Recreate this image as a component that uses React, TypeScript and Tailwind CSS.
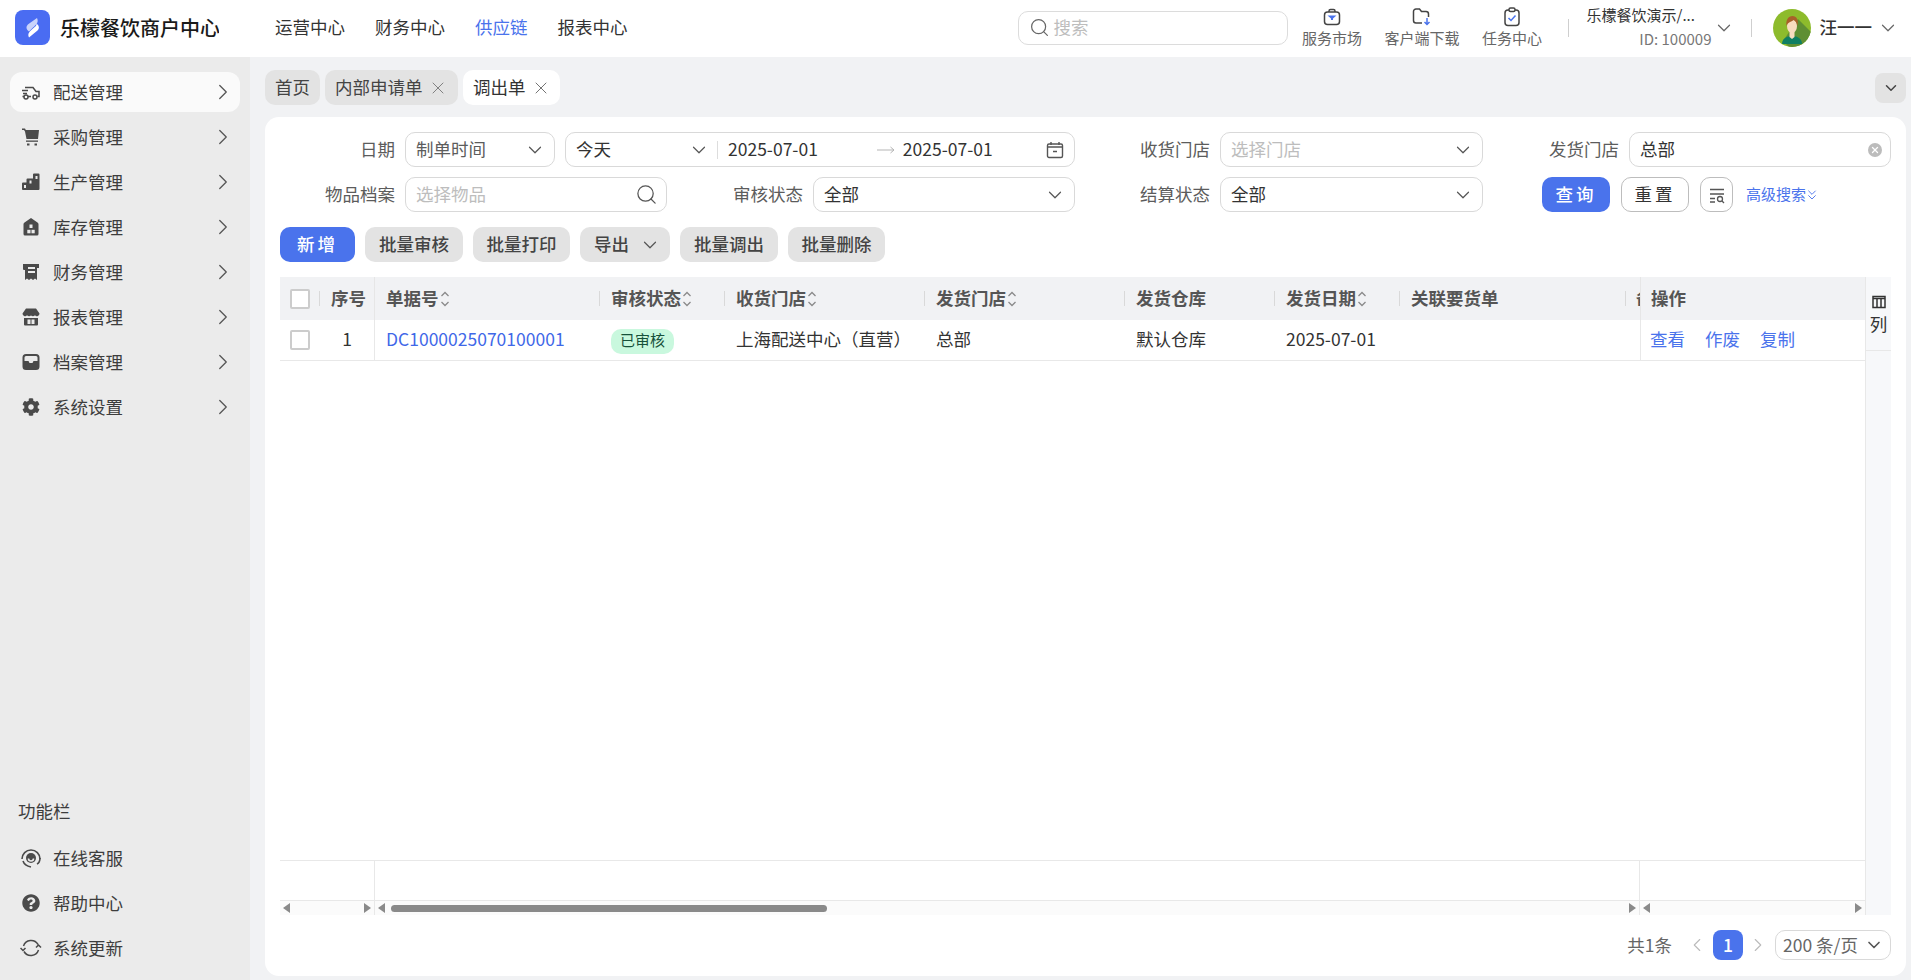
import { ChevronDown, ChevronRight, ChevronLeft, ChevronsDown, Search, X } from "lucide-react";
import { FaCog, FaQuestionCircle } from "react-icons/fa";

const iconGray = "#4a4a4a";

function Logo() {
  return (
    <div className="w-[35px] h-[35px] rounded-[8px] bg-[#4a6cf2] flex items-center justify-center">
      <svg width="35" height="35" viewBox="0 0 35 35">
        <path d="M22 8 C24 12 21.500 14.500 18 17.500 L14 21.500 C10.500 19 11 16 13.500 14 Z" fill="#fff" opacity="0.7" />
        <path d="M21.500 13.500 C24.500 16 24.500 18.500 22.500 20.500 L14 27.500 C12 23.500 15 21 18 18.500 C20 17 21.800 15.500 21.500 13.500 Z" fill="#fff" />
      </svg>
    </div>
  );
}

function TruckIcon() {
  return (
    <svg width="20" height="20" viewBox="0 0 20 20" fill="none" stroke={iconGray} strokeWidth="1.5">
      <path d="M4 5.500h8l3 4h3v5h-1.500M10 14.500h-3M3 14.500H1.500M1 8.500h6M2 11.500h4" />
      <circle cx="5" cy="15" r="2" />
      <circle cx="14" cy="15" r="2" />
    </svg>
  );
}

function CartIcon() {
  return (
    <svg width="20" height="20" viewBox="0 0 20 20" fill={iconGray}>
      <path d="M1 1.500h3l.8 1.500H18l-1 9H5.500L4 4.500 3 3H1z" />
      <rect x="5" y="13.500" width="12" height="1.300" />
      <rect x="6" y="16.500" width="2.500" height="2" />
      <rect x="13.500" y="16.500" width="2.500" height="2" />
    </svg>
  );
}

function FactoryIcon() {
  return (
    <svg width="20" height="20" viewBox="0 0 20 20" fill={iconGray}>
      <path d="M13 1.500h4.500a1 1 0 0 1 1 1V17a1 1 0 0 1-1 1H2a1 1 0 0 1-1-1v-5.500a1 1 0 0 1 1-1h3.500V7.500a1 1 0 0 1 1-1H12V2.500a1 1 0 0 1 1-1z" />
      <rect x="14.500" y="4" width="2" height="3" fill="#ebebeb" />
      <rect x="8.500" y="8.500" width="2" height="3" fill="#ebebeb" />
      <rect x="3" y="13" width="2" height="3" fill="#ebebeb" />
    </svg>
  );
}

function WarehouseIcon() {
  return (
    <svg width="20" height="20" viewBox="0 0 20 20" fill={iconGray}>
      <path d="M10 1l6.500 4.500a2 2 0 0 1 1 1.700V17a1.500 1.500 0 0 1-1.500 1.500H4A1.500 1.500 0 0 1 2.500 17V7.200a2 2 0 0 1 1-1.700z" />
      <rect x="8.500" y="7.500" width="3" height="3.500" fill="#ebebeb" />
      <rect x="6.300" y="12.800" width="3.200" height="3.500" fill="#ebebeb" />
      <rect x="10.500" y="12.800" width="3.200" height="3.500" fill="#ebebeb" />
    </svg>
  );
}

function FinanceIcon() {
  return (
    <svg width="20" height="20" viewBox="0 0 20 20" fill={iconGray}>
      <path d="M2 2h16v4h-2v12l-2-1.500-2 1.500-2-1.500-2 1.500-2-1.500L4 18V8H3a1 1 0 0 1-1-1z" />
      <rect x="7" y="5" width="7" height="2" fill="#ebebeb" />
      <rect x="7" y="9" width="7" height="2" fill="#ebebeb" />
    </svg>
  );
}

function StoreIcon() {
  return (
    <svg width="20" height="20" viewBox="0 0 20 20" fill={iconGray}>
      <path d="M5 1.500h10l3.500 5a2.600 2.600 0 0 1-4.500 1.800 3 3 0 0 1-4 .2 3 3 0 0 1-4-.2A2.600 2.600 0 0 1 1.500 6.500z" />
      <path d="M3 11h14v6.500a1 1 0 0 1-1 1H4a1 1 0 0 1-1-1z" />
      <rect x="6.500" y="12.500" width="3" height="4.500" fill="#ebebeb" />
      <rect x="10.500" y="12.500" width="3" height="4.500" fill="#ebebeb" />
    </svg>
  );
}

function InboxIcon() {
  return (
    <svg width="20" height="20" viewBox="0 0 20 20" fill={iconGray}>
      <path d="M5 2h10a3.500 3.500 0 0 1 3.500 3.500v9A3.500 3.500 0 0 1 15 18H5a3.500 3.500 0 0 1-3.500-3.500v-9A3.500 3.500 0 0 1 5 2z" />
      <path d="M3.500 5.500A1.500 1.500 0 0 1 5 4h10a1.500 1.500 0 0 1 1.500 1.500V9h-4l-1 2h-3l-1-2h-4z" fill="#ebebeb" />
    </svg>
  );
}

function ServiceIcon() {
  return (
    <svg width="22" height="22" viewBox="0 0 22 22" fill="none" stroke={iconGray} strokeWidth="1.6">
      <path d="M2 12a9 9 0 0 1 18 0" />
      <path d="M3 14c1 3 3 5 8 6" />
      <path d="M20 11c0 3-1 5-3 6" />
      <circle cx="11" cy="11" r="5" fill={iconGray} stroke="none" />
      <path d="M8.500 11.500a2.500 2.500 0 0 0 5 0" stroke="#ebebeb" />
    </svg>
  );
}

function SyncIcon() {
  return (
    <svg width="22" height="22" viewBox="0 0 22 22" fill="none" stroke={iconGray} strokeWidth="1.5">
      <path d="M3.500 9A8 8 0 0 1 18 7.500" />
      <path d="M18.500 13A8 8 0 0 1 4 14.500" />
      <path d="M1.500 11l2.500 2.500L6.500 11" transform="translate(-1 0)" />
      <path d="M15.500 10.500L18 8l2.500 2.500" transform="translate(0.500 0)" />
    </svg>
  );
}

function BagIcon() {
  return (
    <svg width="18" height="18" viewBox="0 0 18 18" fill="none" strokeWidth="1.5">
      <path d="M6 4V3a1.500 1.500 0 0 1 1.500-1.500h3A1.500 1.500 0 0 1 12 3v1" stroke="#444" />
      <rect x="1.500" y="4" width="15" height="12.500" rx="3" stroke="#444" />
      <path d="M4.500 7.500h9L10 10.500v1.500H8v-1.500z" fill="#4a73ec" />
    </svg>
  );
}

function FolderDownIcon() {
  return (
    <svg width="20" height="18" viewBox="0 0 20 18" fill="none" strokeWidth="1.5">
      <path d="M10 15H4a2.500 2.500 0 0 1-2.500-2.500v-9A2.500 2.500 0 0 1 4 1h3.500l2 2.500H14a2.500 2.500 0 0 1 2.500 2.500v3" stroke="#444" />
      <path d="M15 10v6M12.500 14l2.500 2.500 2.500-2.500" stroke="#4a73ec" />
    </svg>
  );
}

function ClipboardIcon() {
  return (
    <svg width="18" height="20" viewBox="0 0 18 20" fill="none" strokeWidth="1.5">
      <rect x="2" y="3" width="14" height="15.500" rx="3" stroke="#444" />
      <rect x="6" y="1" width="6" height="3.500" rx="1.500" fill="#fff" stroke="#444" />
      <path d="M5.500 11l2.500 2.500 4.500-5" stroke="#4a73ec" />
    </svg>
  );
}

function Avatar() {
  return (
    <svg width="38" height="38" viewBox="0 0 38 38">
      <clipPath id="av">
        <circle cx="19" cy="19" r="19" />
      </clipPath>
      <g clipPath="url(#av)">
        <rect width="38" height="38" fill="#8dbb2c" />
        <path d="M25 10L42 27V42H20L10 32z" fill="#5f8f33" />
        <path d="M9 35c0-5 4-8 10-8s10 3 10 8z" fill="#0f7f62" />
        <path d="M16.500 22h5v6l-2.500 2-2.500-2z" fill="#f8dcc0" />
        <ellipse cx="19" cy="17" rx="5" ry="7" fill="#f8dcc0" />
        <path d="M13.500 17c-1-6 2-10 6-10s6.500 4 5 10c-.5-3-2-5-4-6-1 1.500-6 2-7 6z" fill="#a8612a" />
      </g>
    </svg>
  );
}

function CalendarIcon() {
  return (
    <svg width="18" height="18" viewBox="0 0 18 18" fill="none" stroke="#555" strokeWidth="1.4">
      <rect x="1.500" y="3" width="15" height="13.500" rx="1.500" />
      <path d="M5 1v3M13 1v3M1.500 6h15M7 10.500h4" />
    </svg>
  );
}

function FilterListIcon() {
  return (
    <svg width="18" height="18" viewBox="0 0 18 18" fill="none" stroke="#555" strokeWidth="1.3">
      <path d="M2 3.500h14M2 8h14M2 12.500h5M2 16h5" />
      <circle cx="12" cy="13" r="2.500" />
      <path d="M14 15l2 2" />
    </svg>
  );
}

function SortIcon() {
  return (
    <svg width="10" height="18" viewBox="0 0 10 18" fill="none" stroke="#8a8a8a" strokeWidth="1.3" className="ml-[1px]">
      <path d="M1.500 6L5 2.500 8.500 6M1.500 12L5 15.500 8.500 12" />
    </svg>
  );
}

function ArrowLine() {
  return (
    <svg width="18" height="8" viewBox="0 0 18 8" fill="none" stroke="#b5b5b5" strokeWidth="1">
      <path d="M0 4h17M13.500 1l3.500 3-3.500 3" />
    </svg>
  );
}

function Tri({ dir }: { dir: "l" | "r" }) {
  return (
    <svg width="8" height="10" viewBox="0 0 8 10" fill="#8a8a8a">
      {dir === "l" ? <path d="M7 0v10L0 5z" /> : <path d="M1 0v10l7-5z" />}
    </svg>
  );
}

const menus = [
  { label: "配送管理", icon: <TruckIcon />, active: true },
  { label: "采购管理", icon: <CartIcon /> },
  { label: "生产管理", icon: <FactoryIcon /> },
  { label: "库存管理", icon: <WarehouseIcon /> },
  { label: "财务管理", icon: <FinanceIcon /> },
  { label: "报表管理", icon: <StoreIcon /> },
  { label: "档案管理", icon: <InboxIcon /> },
  { label: "系统设置", icon: <FaCog size={18} color={iconGray} /> },
];

const tools = [
  { label: "在线客服", icon: <ServiceIcon /> },
  { label: "帮助中心", icon: <FaQuestionCircle size={18} color={iconGray} /> },
  { label: "系统更新", icon: <SyncIcon /> },
];

const headerTools = [
  { label: "服务市场", icon: <BagIcon />, w: "w-[59px]" },
  { label: "客户端下载", icon: <FolderDownIcon />, w: "w-[75px]" },
  { label: "任务中心", icon: <ClipboardIcon />, w: "w-[59px]" },
];

function Sidebar() {
  return (
    <aside className="w-[250px] shrink-0 bg-[#ebebeb] flex flex-col justify-between pt-[15px] pb-[12px]">
      <nav className="flex flex-col gap-[5px]">
        {menus.map((m) => (
          <div
            key={m.label}
            className={
              "mx-[10px] h-10 rounded-[12px] pl-[11px] pr-[4px] flex items-center text-[17.5px] text-[#3d3d3d] " +
              (m.active ? "bg-[#fafafa]" : "")
            }
          >
            <span className="w-[20px] h-[20px] flex items-center justify-center mr-[12px]">{m.icon}</span>
            <span className="flex-1">{m.label}</span>
            <ChevronRight size={26} strokeWidth={1.2} color="#555" />
          </div>
        ))}
      </nav>
      <div className="flex flex-col gap-[5px]">
        <div className="pl-[18px] mb-[10px] h-[25px] text-[17.5px] leading-[25px] text-[#3d3d3d]">功能栏</div>
        {tools.map((t) => (
          <div key={t.label} className="mx-[10px] h-10 pl-[10px] flex items-center text-[17.5px] text-[#3d3d3d]">
            <span className="w-[22px] h-[22px] flex items-center justify-center mr-[11px]">{t.icon}</span>
            {t.label}
          </div>
        ))}
      </div>
    </aside>
  );
}

function Header() {
  return (
    <header className="h-[57px] shrink-0 bg-white flex items-center pl-[15px] pr-[12px] pb-[2px]">
      <Logo />
      <span className="ml-[10px] w-[159px] overflow-hidden whitespace-nowrap text-[20px] font-medium text-[#1a1a1a]">
        乐檬餐饮商户中心
      </span>
      <nav className="ml-[56px] flex gap-[30px] text-[17.5px] text-[#333]">
        <span>运营中心</span>
        <span>财务中心</span>
        <span className="text-[#4a73ec]">供应链</span>
        <span>报表中心</span>
      </nav>
      <div className="ml-auto flex items-center">
        <div className="w-[270px] h-[34px] rounded-[10px] border border-[#dcdcdc] flex items-center pl-[10px] gap-[4px] text-[17.5px] text-[#bdbdbd]">
          <Search size={21} strokeWidth={1.4} color="#666" />
          搜索
        </div>
        <div className="ml-[15px] flex gap-[23px] text-[15px] text-[#666] leading-[18px]">
          {headerTools.map((t) => (
            <div key={t.label} className={t.w + " flex flex-col items-center gap-[3px]"}>
              <span className="h-[18px] flex items-center justify-center">{t.icon}</span>
              <span className="whitespace-nowrap">{t.label}</span>
            </div>
          ))}
        </div>
        <div className="ml-[26px] w-px h-[18px] bg-[#cfcfcf]" />
        <div className="ml-[18px] w-[126px] pb-[2px] flex flex-col items-end text-[15px] leading-[18px]">
          <span className="w-full whitespace-nowrap text-[#333] mb-[6px]">乐檬餐饮演示/...</span>
          <span className="text-[#777] pr-[1px]">ID: 100009</span>
        </div>
        <ChevronDown size={22} strokeWidth={1.3} color="#666" />
        <div className="ml-[16px] w-px h-[18px] bg-[#cfcfcf]" />
        <div className="ml-[21px]">
          <Avatar />
        </div>
        <span className="ml-[9px] text-[17.5px] font-medium text-[#333]">汪一一</span>
        <ChevronDown className="ml-[5px]" size={22} strokeWidth={1.3} color="#666" />
      </div>
    </header>
  );
}

function Tabs() {
  return (
    <div className="flex items-center h-[35px] gap-[5px] text-[17.5px]">
      <div className="w-[55px] h-full pl-[10px] rounded-[10px] bg-[#e3e3e3] flex items-center text-[#444]">首页</div>
      <div className="w-[133px] h-full pl-[10px] rounded-[10px] bg-[#e3e3e3] flex items-center gap-[5px] text-[#444]">
        内部申请单
        <X size={20} strokeWidth={1.1} color="#777" />
      </div>
      <div className="w-[97px] h-full pl-[10px] rounded-[10px] bg-white flex items-center gap-[5px] text-[#333]">
        调出单
        <X size={20} strokeWidth={1.1} color="#666" />
      </div>
      <div className="ml-auto w-[31px] h-[30px] rounded-[8px] bg-[#e3e3e3] flex items-center justify-center">
        <ChevronDown size={18} strokeWidth={2} color="#444" />
      </div>
    </div>
  );
}

const boxBase =
  "h-[35px] rounded-[10px] border border-[#d9d9d9] bg-white flex items-center text-[17.5px] pl-[10px] pr-[8px]";

function Label({ width, text }: { width: string; text: string }) {
  return <span className={width + " text-right text-[17.5px] text-[#5c5c5c] mr-[10px] shrink-0"}>{text}</span>;
}

function FilterBar() {
  return (
    <div className="flex flex-col gap-[10px] mx-[15px]">
      <div className="flex items-center">
        <Label width="w-[115px]" text="日期" />
        <div className={boxBase + " w-[150px] justify-between text-[#5c5c5c]"}>
          制单时间
          <ChevronDown size={22} strokeWidth={1.3} color="#555" />
        </div>
        <div className={boxBase + " ml-[10px] w-[510px] !pr-[10px] text-[#333]"}>
          <span className="w-[112px]">今天</span>
          <ChevronDown size={22} strokeWidth={1.3} color="#555" />
          <span className="ml-[7px] w-px h-[18px] bg-[#ddd]" />
          <span className="ml-[10px]">2025-07-01</span>
          <span className="ml-[59px]">
            <ArrowLine />
          </span>
          <span className="ml-[8px] flex-1">2025-07-01</span>
          <CalendarIcon />
        </div>
        <Label width="w-[135px]" text="收货门店" />
        <div className={boxBase + " w-[263px] justify-between text-[#bdbdbd]"}>
          选择门店
          <ChevronDown size={22} strokeWidth={1.3} color="#555" />
        </div>
        <Label width="w-[136px]" text="发货门店" />
        <div className={boxBase + " flex-1 justify-between text-[#333]"}>
          总部
          <span className="w-[14px] h-[14px] rounded-full bg-[#bcbcbc] flex items-center justify-center">
            <X size={10} strokeWidth={3} color="#fff" />
          </span>
        </div>
      </div>
      <div className="flex items-center">
        <Label width="w-[115px]" text="物品档案" />
        <div className={boxBase + " w-[262px] justify-between text-[#bdbdbd]"}>
          选择物品
          <Search size={23} strokeWidth={1.3} color="#555" />
        </div>
        <Label width="w-[136px]" text="审核状态" />
        <div className={boxBase + " w-[262px] justify-between text-[#333]"}>
          全部
          <ChevronDown size={22} strokeWidth={1.3} color="#555" />
        </div>
        <Label width="w-[135px]" text="结算状态" />
        <div className={boxBase + " w-[263px] justify-between text-[#333]"}>
          全部
          <ChevronDown size={22} strokeWidth={1.3} color="#555" />
        </div>
        <button className="ml-[59px] w-[68px] h-[35px] rounded-[10px] bg-[#4a73ec] text-white text-[17.5px] font-medium tracking-[3px]">
          查询
        </button>
        <button className="ml-[11px] w-[68px] h-[35px] rounded-[10px] border border-[#bdbdbd] bg-white text-[#333] text-[17.5px] tracking-[3px]">
          重置
        </button>
        <button className="ml-[11px] w-[33px] h-[35px] rounded-[10px] border border-[#bdbdbd] bg-white flex items-center justify-center">
          <FilterListIcon />
        </button>
        <span className="ml-[13px] flex items-center text-[15px] text-[#4a73ec] whitespace-nowrap">
          高级搜索
          <ChevronsDown className="-ml-[2px]" size={16} strokeWidth={1.4} />
        </span>
      </div>
    </div>
  );
}

function Actions() {
  const gray = "h-[35px] rounded-[10px] bg-[#e3e3e3] text-[17.5px] font-medium text-[#444]";
  return (
    <div className="mx-[15px] mt-[15px] flex gap-[10px]">
      <button className="w-[75px] h-[35px] rounded-[10px] bg-[#4a73ec] text-white text-[17.5px] font-medium tracking-[3px]">
        新增
      </button>
      <button className={gray + " w-[98px]"}>批量审核</button>
      <button className={gray + " w-[97px]"}>批量打印</button>
      <button className={gray + " w-[90px] flex items-center pl-[14px] gap-[10px]"}>
        导出
        <ChevronDown size={22} strokeWidth={1.3} color="#555" />
      </button>
      <button className={gray + " w-[98px]"}>批量调出</button>
      <button className={gray + " w-[97px]"}>批量删除</button>
    </div>
  );
}

const cols = [
  { title: "单据号", sort: true, w: "w-[225px]" },
  { title: "审核状态", sort: true, w: "w-[125px]" },
  { title: "收货门店", sort: true, w: "w-[200px]" },
  { title: "发货门店", sort: true, w: "w-[200px]" },
  { title: "发货仓库", w: "w-[150px]" },
  { title: "发货日期", sort: true, w: "w-[125px]" },
  { title: "关联要货单", w: "w-[226px]" },
];

const Checkbox = () => <span className="block w-5 h-5 rounded-[2px] border-2 border-[#cccccc] bg-white" />;

function DataTable() {
  return (
    <div className="mx-[15px] mt-[15px] flex-1 min-h-0 flex">
      <div className="w-[1585px] flex flex-col">
        {/* header */}
        <div className="h-[43px] flex items-center bg-[#f1f2f4] text-[17.5px] font-semibold text-[#555] leading-[22px]">
          <div className="w-[40px] pl-[10px] flex items-center">
            <Checkbox />
            <span className="ml-[9px] w-px h-[15px] bg-[#d9d9d9]" />
          </div>
          <div className="w-[55px] h-full pl-[11px] pb-[2px] flex items-center border-r border-[#e6e6e6]">序号</div>
          {cols.map((c) => (
            <div key={c.title} className={c.w + " flex items-center pl-[11px]"}>
              <span className="mb-[2px]">{c.title}</span>
              {c.sort && <SortIcon />}
              <span className="ml-auto w-px h-[15px] bg-[#d9d9d9]" />
            </div>
          ))}
          {/* next column is scrolled under the fixed one, only its edge shows */}
          <div className="w-[14px] h-full pl-[10px] pb-[2px] overflow-hidden whitespace-nowrap flex items-center text-[15px]">备</div>
          <div className="flex-1 h-full pl-[10px] pb-[2px] flex items-center border-l border-[#e6e6e6] bg-[#f1f2f4]">操作</div>
        </div>
        {/* row */}
        <div className="h-[40px] flex items-center bg-white text-[17.5px] text-[#333] border-b border-[#e8e8e8] box-content -mb-px">
          <div className="w-[40px] pl-[10px]">
            <Checkbox />
          </div>
          <div className="w-[55px] h-full pb-[2px] flex items-center justify-center border-r border-[#e8e8e8]">1</div>
          <div className="w-[225px] pl-[11px] pb-[2px] text-[#3f68e8]">DC1000025070100001</div>
          <div className="w-[125px] pl-[11px]">
            <span className="inline-flex items-center h-[25px] px-[9px] pb-[2px] rounded-[10px] bg-[#c9f8de] text-[15px] text-[#17503a]">
              已审核
            </span>
          </div>
          <div className="w-[200px] pl-[11px] pb-[2px] whitespace-nowrap">上海配送中心（直营）</div>
          <div className="w-[200px] pl-[11px] pb-[2px]">总部</div>
          <div className="w-[150px] pl-[11px] pb-[2px]">默认仓库</div>
          <div className="w-[125px] pl-[11px] pb-[2px]">2025-07-01</div>
          <div className="w-[240px]" />
          <div className="flex-1 h-full pl-[9px] pb-[2px] flex items-center gap-[20px] border-l border-[#e8e8e8] text-[#4a73ec]">
            <span>查看</span>
            <span>作废</span>
            <span>复制</span>
          </div>
        </div>
        <div className="flex-1" />
        {/* summary */}
        <div className="h-[41px] flex border-y border-[#e8e8e8]">
          <div className="w-[95px] border-r border-[#e8e8e8]" />
          <div className="w-[1265px] border-r border-[#e8e8e8]" />
        </div>
        {/* scroll */}
        <div className="h-[14px] flex items-center bg-[#fbfbfb]">
          <div className="w-[95px] h-full px-[3px] flex items-center justify-between border-r border-[#e8e8e8]">
            <Tri dir="l" />
            <Tri dir="r" />
          </div>
          <div className="w-[1265px] h-full pl-[3px] pr-[3px] flex items-center border-r border-[#e8e8e8]">
            <Tri dir="l" />
            <div className="ml-[5px] w-[436px] h-[7px] rounded-full bg-[#8a8a8a]" />
            <span className="ml-auto">
              <Tri dir="r" />
            </span>
          </div>
          <div className="flex-1 h-full px-[3px] flex items-center justify-between">
            <Tri dir="l" />
            <Tri dir="r" />
          </div>
        </div>
      </div>
      {/* column settings */}
      <div className="flex-1 bg-[#f7f8fa] border-l border-[#e8e8e8]">
        <div className="h-[74px] border-b border-[#e8e8e8] flex flex-col items-center pt-[18px] text-[17.5px] text-[#333] leading-[24px]">
          <svg width="14" height="14" viewBox="0 0 14 14" fill="none" stroke="#333" strokeWidth="1.5">
            <rect x="1" y="1.500" width="12" height="11" />
            <path d="M1 3.500h12M5 3.500v9M9 3.500v9" />
          </svg>
          <span className="mt-[3px]">列</span>
        </div>
      </div>
    </div>
  );
}

function Pagination() {
  return (
    <div className="mx-[15px] mt-[15px] mb-[16px] h-[30px] flex items-center justify-end text-[17.5px] text-[#666]">
      <span>共1条</span>
      <ChevronLeft className="ml-[14px]" size={22} strokeWidth={1.2} color="#bbb" />
      <span className="ml-[5px] w-[30px] h-[30px] rounded-[8px] bg-[#4a73ec] text-white font-medium flex items-center justify-center">
        1
      </span>
      <ChevronRight className="ml-[4px]" size={22} strokeWidth={1.2} color="#bbb" />
      <div className="ml-[6px] w-[116px] h-[30px] rounded-[10px] border border-[#d9d9d9] flex items-center justify-between pl-[7px] pr-[6px]">
        200 条/页
        <ChevronDown size={20} strokeWidth={2} color="#555" />
      </div>
    </div>
  );
}

export default function App() {
  return (
    <div className="w-[1911px] h-[980px] overflow-hidden flex flex-col font-['Noto_Sans_CJK_SC','Noto_Sans',sans-serif]">
      <Header />
      <div className="flex-1 min-h-0 flex">
        <Sidebar />
        <main className="flex-1 min-w-0 bg-[#f1f2f4] pl-[15px] pr-[5px] pt-[13px] pb-[4px] flex flex-col gap-[12px]">
          <Tabs />
          <section className="flex-1 min-h-0 bg-white rounded-[14px] pt-[15px] flex flex-col">
            <FilterBar />
            <Actions />
            <DataTable />
            <Pagination />
          </section>
        </main>
      </div>
    </div>
  );
}
